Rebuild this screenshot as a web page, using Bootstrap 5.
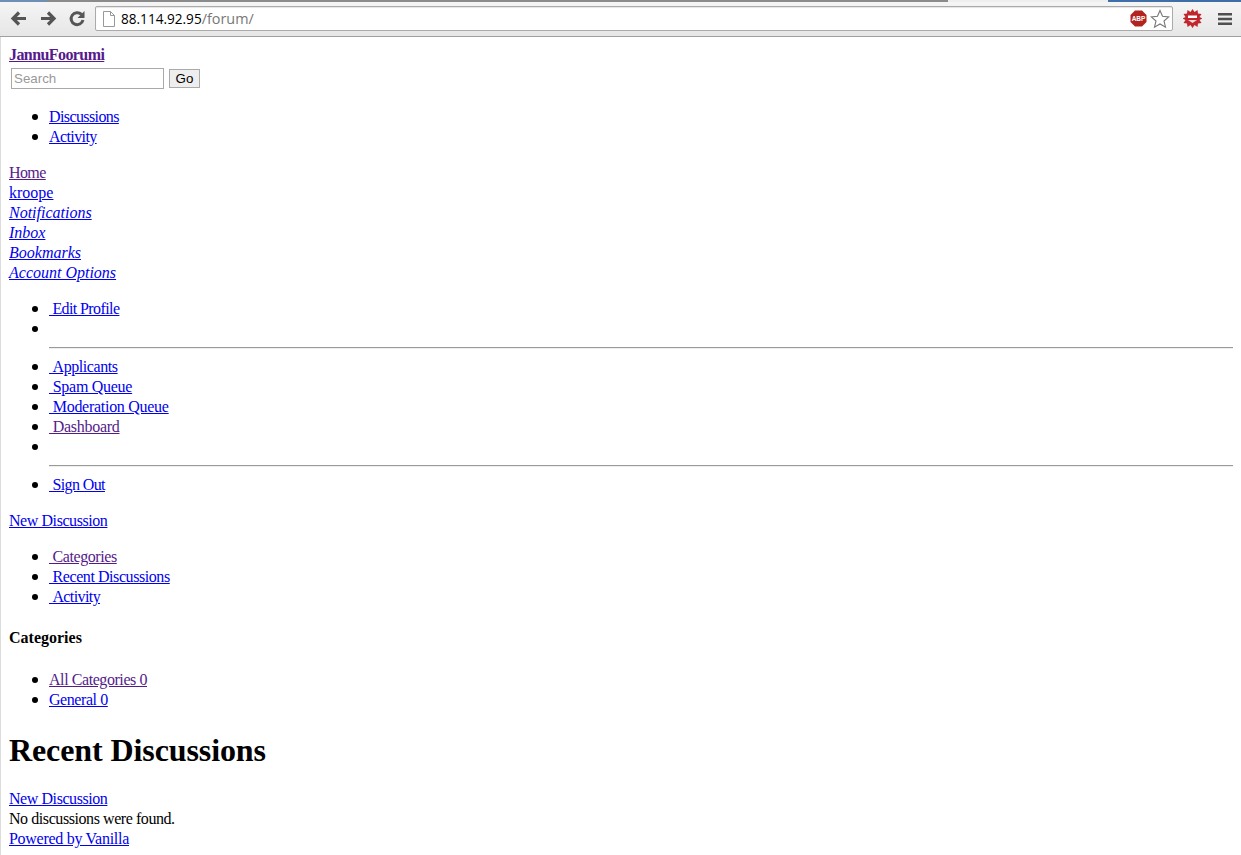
<!DOCTYPE html>
<html lang="et">
<head>
<meta charset="utf-8">
<title>JannuFoorumi</title>
<link href="https://cdn.jsdelivr.net/npm/bootstrap@5.3.0/dist/css/bootstrap.min.css" rel="stylesheet">
<style>
html,body{height:100%}
body{margin:0;font-family:"Liberation Serif",serif;font-size:16px;line-height:20px;letter-spacing:-.43px;color:#000;background:#fff;overflow:hidden}
.tabstrip{height:2px;background:linear-gradient(90deg,#6f8fb5 0,#6f8fb5 47px,#8b8b8b 47px,#8b8b8b 948px,#eee 948px,#eee 1108px,#3f6ea8 1108px,#3f6ea8 1241px)}
.chrome-bar{height:35px;background:linear-gradient(#f5f5f5,#e6e6e6);border-bottom:1px solid #a0a0a0;padding:4px 0 5px 9px;letter-spacing:0}
.tb-btn{width:19px;height:19px;flex:none;display:block}
.omni{width:1078px;height:25px;margin-left:8px;background:#fff;border:1px solid #aaa;border-radius:2px;box-shadow:inset 0 1px 1px #e4e4e4;font-family:"Open Sans",sans-serif;font-size:13.6px;line-height:23px;padding:0 2px 0 7px;color:#000}
.omni .path{color:#777;font-size:14.4px}
.page-ico{width:12px;height:16px;margin-right:6px;flex:none}
.pg{margin:0;padding:8px 8px 0 8px;border-left:1px solid #dcdcdc;height:calc(100% - 37px)}
.pg a{color:#00e;text-decoration:underline}
.pg a.seen{color:#551a8b}
.pg ul{margin:16px 0;padding-left:40px;list-style:none}
.pg li{position:relative}
.pg li::before{content:"";position:absolute;left:-17px;top:7px;width:6px;height:6px;border-radius:50%;background:#000}
.pg a.fst-italic,.pg a.full{letter-spacing:0}
.pg a.tight{letter-spacing:-.6px}
.pg a.wide{letter-spacing:-.28px}
.brand-line{font-weight:700;letter-spacing:-.58px}
.search-form{height:26px;padding:3px 0 0 2px;gap:5px;letter-spacing:0}
.search-input{width:153px;height:21px;border:1px solid #a9a9a9;font:13.33px "Liberation Sans",sans-serif;padding:1px 2px;color:#000;outline:0}
.search-input::placeholder{color:#999;opacity:1}
.go-btn{width:31px;height:19px;margin-top:1px;padding:0;border:1px solid #aaa;background:#eee;font:13.33px "Liberation Sans",sans-serif;color:#000;line-height:16px}
.pg hr{margin:8px 0;height:2px;border:0;border-top:1px solid #9a9a9a;border-bottom:1px solid #eee;opacity:1;background:none}
.cat-head{font-size:16px;font-weight:700;line-height:20px;margin:21px 0 22px;font-family:inherit;letter-spacing:0}
.pg ul.cats{margin-top:0}
.main-head{font-size:32px;font-weight:700;line-height:40px;margin:20px 0 19px;font-family:inherit;letter-spacing:-.1px}
</style>
</head>
<body>
<div class="tabstrip"></div>
<div class="chrome-bar d-flex align-items-center">
  <svg class="tb-btn" viewBox="0 0 19 19"><path d="M17 9.5H5M10 3.5 4 9.5l6 6" fill="none" stroke="#555" stroke-width="3.2"/></svg>
  <svg class="tb-btn" style="margin-left:11px" viewBox="0 0 19 19"><path d="M2 9.5h12M9 3.5l6 6-6 6" fill="none" stroke="#555" stroke-width="3.2"/></svg>
  <svg class="tb-btn" style="margin-left:10px" viewBox="0 0 19 19"><path d="M15 11a6 6 0 1 1-1.6-5.6" fill="none" stroke="#555" stroke-width="3"/><path d="M16.5 2v7h-7z" fill="#555"/></svg>
  <div class="omni d-flex align-items-center">
    <svg class="page-ico" viewBox="0 0 12 16"><path d="M.5.5h7l4 4v11H.5z M7.5.5v4h4" fill="#fff" stroke="#999"/></svg>
    <span>88.114.92.95<span class="path">/forum/</span></span>
    <svg class="ms-auto" width="17" height="17" viewBox="0 0 17 17" style="margin-right:3px"><path d="M5 .5h7L16.500 5v7L12 16.500H5L.5 12V5z" fill="#b3231f"/><text x="8.500" y="11" font-family="Liberation Sans" font-size="6.500" font-weight="700" fill="#fff" text-anchor="middle">ABP</text></svg>
    <svg width="20" height="20" viewBox="0 0 20 20"><path d="M10 1.500l2.500 5.800 6.300.6-4.800 4.100 1.500 6.200L10 15l-5.500 3.200L6 12 1.200 7.900l6.300-.6z" fill="#fff" stroke="#777" stroke-width="1.100"/></svg>
  </div>
  <svg width="19" height="19" viewBox="0 0 19 19" style="margin-left:10px"><path d="M9.500 0l2 3 3-2 .5 3.500 3.500.5-2 3 3 1.500-3 1.500 2 3-3.500.5-.5 3.500-3-2-2 3-2-3-3 2-.5-3.500L.5 14l2-3-3-1.500 3-1.500-2-3L4 4.500 4.500 1l3 2z" fill="#c0272d"/><path d="M5 6.500h9v2.500H5z" fill="#fff"/><path d="M5 11h9l-4.500 3z" fill="#f4d6d6"/></svg>
  <svg width="14" height="12" viewBox="0 0 14 12" style="margin-left:16px"><path d="M0 0h14v2.600H0zM0 4.700h14v2.600H0zM0 9.400h14V12H0z" fill="#4f4f4f"/></svg>
</div>
<div class="pg">
  <div class="brand-line"><a class="seen" href="#">JannuFoorumi</a></div>
  <form class="search-form d-flex align-items-start">
    <input class="search-input" type="text" placeholder="Search">
    <button class="go-btn" type="button">Go</button>
  </form>
  <ul>
    <li><a class="tight" href="#">Discussions</a></li>
    <li><a class="tight" href="#">Activity</a></li>
  </ul>
  <div><a class="seen tight" href="#">Home</a></div>
  <div><a class="full" href="#">kroope</a></div>
  <div><a class="fst-italic" href="#">Notifications</a></div>
  <div><a class="fst-italic" href="#">Inbox</a></div>
  <div><a class="fst-italic" href="#">Bookmarks</a></div>
  <div><a class="fst-italic" href="#">Account Options</a></div>
  <ul>
    <li><a class="tight" href="#">&nbsp;Edit Profile</a></li>
    <li><div>&nbsp;</div><hr></li>
    <li><a href="#">&nbsp;Applicants</a></li>
    <li><a class="wide" href="#">&nbsp;Spam Queue</a></li>
    <li><a class="wide" href="#">&nbsp;Moderation Queue</a></li>
    <li><a class="seen wide" href="#">&nbsp;Dashboard</a></li>
    <li><div>&nbsp;</div><hr></li>
    <li><a class="tight" href="#">&nbsp;Sign Out</a></li>
  </ul>
  <div><a href="#">New Discussion</a></div>
  <ul>
    <li><a class="seen" href="#">&nbsp;Categories</a></li>
    <li><a href="#">&nbsp;Recent Discussions</a></li>
    <li><a class="tight" href="#">&nbsp;Activity</a></li>
  </ul>
  <h4 class="cat-head">Categories</h4>
  <ul class="cats">
    <li><a class="seen" href="#">All Categories 0</a></li>
    <li><a href="#">General 0</a></li>
  </ul>
  <h1 class="main-head">Recent Discussions</h1>
  <div><a href="#">New Discussion</a></div>
  <div>No discussions were found.</div>
  <div><a class="wide" href="#">Powered by Vanilla</a></div>
</div>
</body>
</html>
